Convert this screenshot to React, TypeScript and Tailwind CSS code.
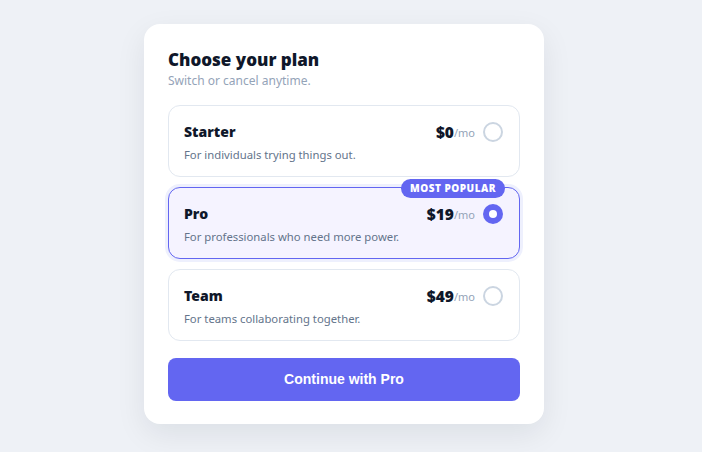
import { useState } from "react";

const plans = [
  { id: "starter", name: "Starter", price: "$0", desc: "For individuals trying things out." },
  { id: "pro", name: "Pro", price: "$19", desc: "For professionals who need more power.", popular: true },
  { id: "team", name: "Team", price: "$49", desc: "For teams collaborating together." },
];

const App = () => {
  const [selected, setSelected] = useState("pro");
  const current = plans.find((p) => p.id === selected);

  return (
    <div className="min-h-screen w-full bg-[#eef1f6] flex justify-center pt-6 pr-[14px] font-['Noto_Sans',sans-serif]">
      <div className="w-[400px] h-[400px] bg-white rounded-2xl px-6 pt-[24px] shadow-[0_10px_30px_rgba(15,23,42,0.08)]">
        {/* Header */}
        <h1 className="text-[17px] leading-[24px] font-black text-[#0f172a]">Choose your plan</h1>
        <p className="text-[12px] leading-[18px] text-[#94a3b8]">Switch or cancel anytime.</p>

        {/* Plans */}
        <div className="mt-[15px] flex flex-col gap-[10px]">
          {plans.map((plan) => {
            const active = plan.id === selected;
            return (
              <div
                key={plan.id}
                role="radio"
                aria-checked={active}
                onClick={() => setSelected(plan.id)}
                className={
                  active
                    ? "relative cursor-pointer h-[72px] rounded-xl border border-[#6366f1] bg-[#f5f3ff] ring-[3px] ring-[#eef0fd] pl-[15px] pr-4 pt-[15px]"
                    : "relative cursor-pointer h-[72px] rounded-xl border border-[#e2e8f0] bg-white pl-[15px] pr-4 pt-[15px]"
                }
              >
                {plan.popular && (
                  <span className="absolute right-[14px] top-[-9px] h-[19px] px-[9px] rounded-full bg-[#6366f1] text-white text-[10px] leading-[19px] font-black tracking-[0.05em]">
                    MOST POPULAR
                  </span>
                )}
                <div className="flex items-center justify-between">
                  <span className="text-[14px] leading-[20px] font-black text-[#0f172a]">{plan.name}</span>
                  <div className="flex items-center">
                    <span className="text-[15.5px] leading-[20px] font-black text-[#0f172a]">{plan.price}</span>
                    <span className="text-[11px] leading-[20px] text-[#94a3b8] mt-[2px]">/mo</span>
                    {active ? (
                      <span className="ml-[8px] w-5 h-5 rounded-full bg-[#6366f1] flex items-center justify-center">
                        <span className="w-2 h-2 rounded-full bg-white" />
                      </span>
                    ) : (
                      <span className="ml-[8px] w-5 h-5 rounded-full border-2 border-[#cbd5e1] bg-white" />
                    )}
                  </div>
                </div>
                <p className="text-[11.3px] leading-[18px] text-[#64748b] mt-[3px]">{plan.desc}</p>
              </div>
            );
          })}
        </div>

        {/* Action */}
        <button
          type="button"
          className="mt-[17px] w-full h-[43px] rounded-lg bg-[#6366f1] text-white text-[14px] font-bold font-['Liberation_Sans',Arial,sans-serif]"
        >
          Continue with {current?.name}
        </button>
      </div>
    </div>
  );
};

export default App;
